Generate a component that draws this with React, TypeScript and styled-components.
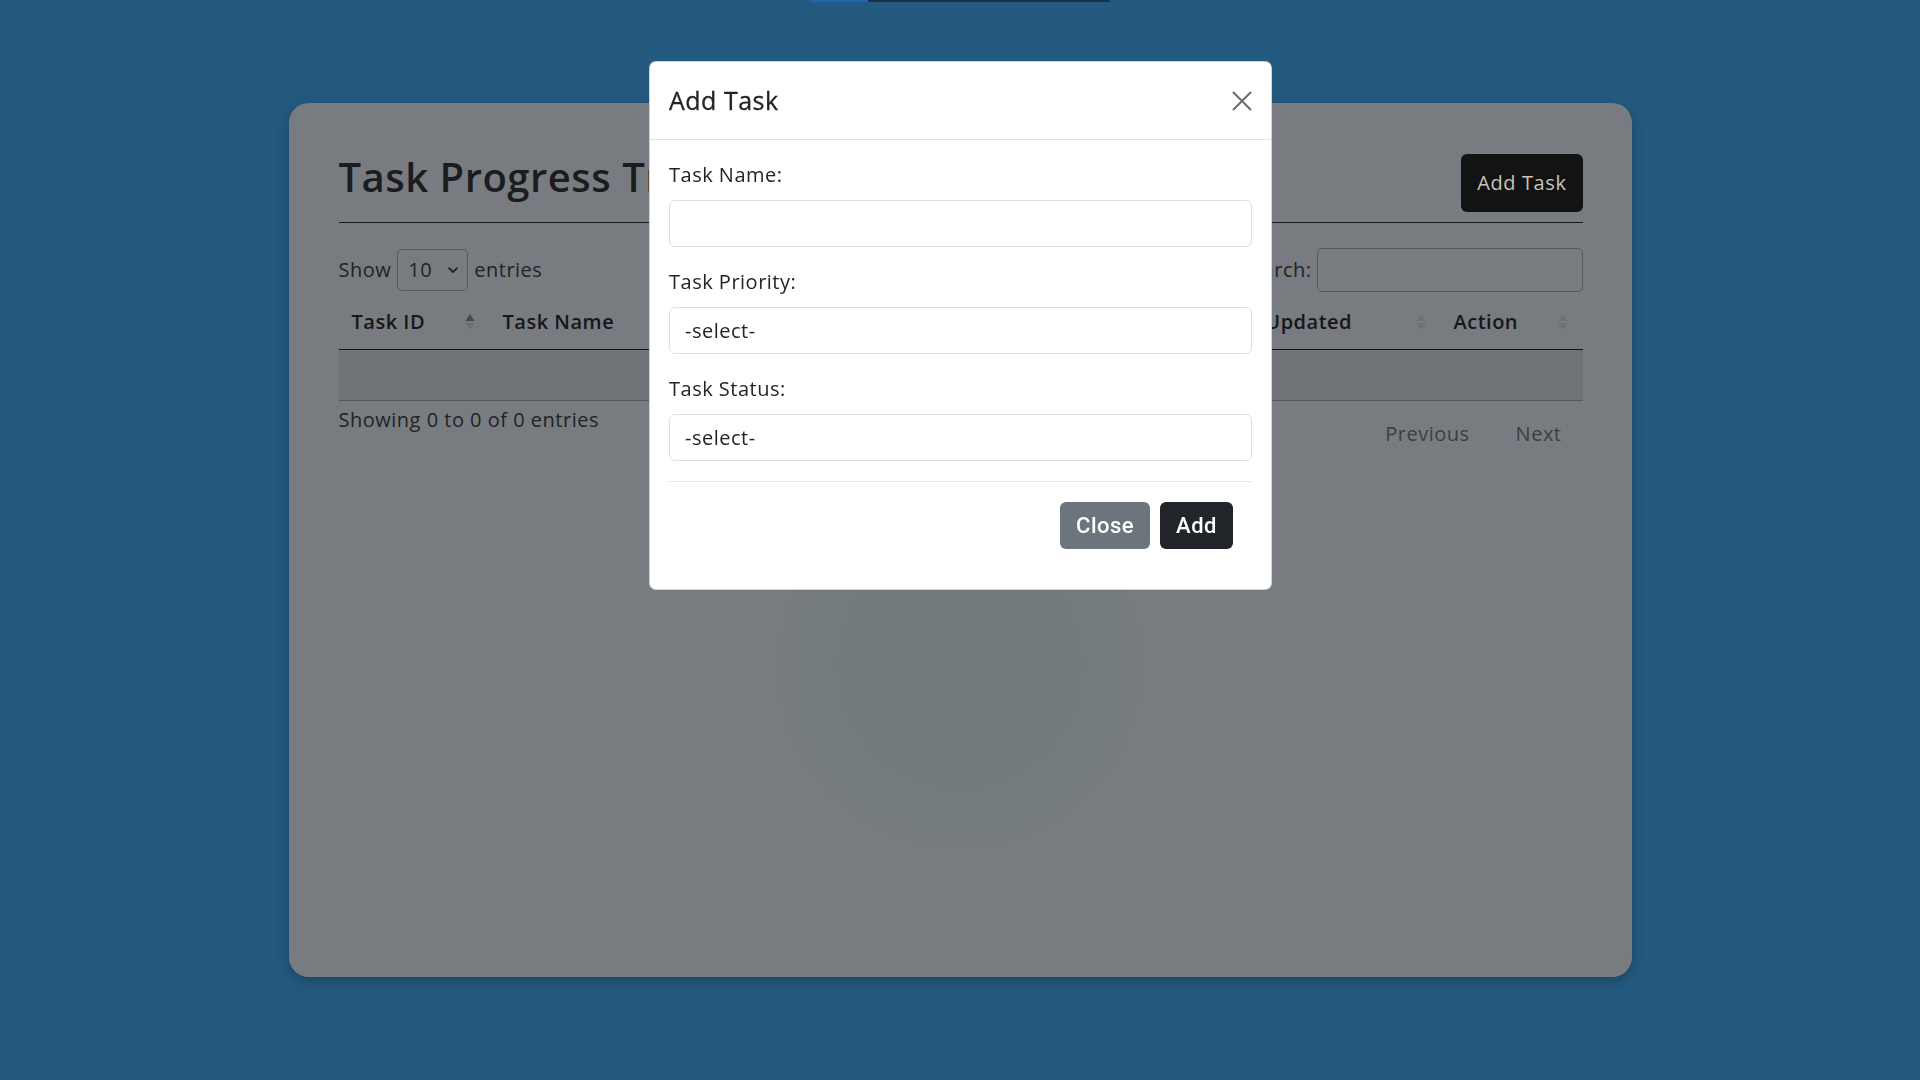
import React from 'react';
import styled, {createGlobalStyle} from "styled-components";

const GlobalStyle = createGlobalStyle`
    * {
        box-sizing: border-box;
    }
    body {
        margin: 0;
        background: #245a7f;
        font-family: "Open Sans", "Noto Sans", sans-serif;
        letter-spacing: 0.5px;
        min-height: 100vh;
    }
`

type SortState = 'asc' | 'none'

const SortIcon = ({state}: { state: SortState }) => (
    <svg width="10" height="20" viewBox="0 0 10 20">
        <polygon points="5,2 9.5,9 0.5,9" fill={state === 'asc' ? '#45494d' : '#6c7074'}/>
        <polygon points="5,18 9.5,11 0.5,11" fill="#6c7074"/>
    </svg>
)

const Chevron = () => (
    <svg width="12" height="12" viewBox="0 0 12 12">
        <path d="M2 4.2 L6 8 L10 4.2" fill="none" stroke="#202326" strokeWidth="1.8" strokeLinecap="round"
              strokeLinejoin="round"/>
    </svg>
)

const CloseIcon = () => (
    <svg width="20" height="20" viewBox="0 0 20 20">
        <path d="M1.5 1.5 L18.5 18.5 M18.5 1.5 L1.5 18.5" stroke="#6b6b6b" strokeWidth="2" strokeLinecap="round"/>
    </svg>
)

const columns: { title: string, width: number, sort: SortState }[] = [
    {title: 'Task ID', width: 151, sort: 'asc'},
    {title: 'Task Name', width: 240, sort: 'none'},
    {title: 'Task Priority', width: 240, sort: 'none'},
    {title: 'Task Status', width: 235, sort: 'none'},
    {title: 'Last Updated', width: 236, sort: 'none'},
    {title: 'Action', width: 142, sort: 'none'},
]

export default function App() {
    return (
        <>
            <GlobalStyle/>
            <Page>
                <TopStrip>
                    <StripSegment width={58} color="#1f66b0"/>
                    <StripSegment width={242} color="#1b3148"/>
                </TopStrip>
                <Card>
                    <TitleRow>
                        <Title>Task Progress Tracker</Title>
                        <DarkButton>Add Task</DarkButton>
                    </TitleRow>
                    <Controls>
                        <LengthControl>
                            Show
                            <FakeSelect>
                                <span>10</span>
                                <Chevron/>
                            </FakeSelect>
                            entries
                        </LengthControl>
                        <SearchControl>
                            Search:
                            <SearchInput type="text"/>
                        </SearchControl>
                    </Controls>
                    <Table>
                        <colgroup>
                            {columns.map(c => <col key={c.title} style={{width: c.width}}/>)}
                        </colgroup>
                        <thead>
                        <tr>
                            {columns.map(c => (
                                <HeadCell key={c.title}>
                                    {c.title}
                                    <SortSlot><SortIcon state={c.sort}/></SortSlot>
                                </HeadCell>
                            ))}
                        </tr>
                        </thead>
                        <tbody>
                        <tr>
                            <EmptyCell colSpan={6}>No data available in table</EmptyCell>
                        </tr>
                        </tbody>
                    </Table>
                    <TableFooter>
                        <Info>Showing 0 to 0 of 0 entries</Info>
                        <Paginate>
                            <PageLink>Previous</PageLink>
                            <PageLink>Next</PageLink>
                        </Paginate>
                    </TableFooter>
                </Card>
            </Page>

            <Overlay>
                <Modal>
                    <ModalHeader>
                        <ModalTitle>Add Task</ModalTitle>
                        <IconButton aria-label="Close"><CloseIcon/></IconButton>
                    </ModalHeader>
                    <ModalBody>
                        <Field>
                            <Label>Task Name:</Label>
                            <TextInput type="text"/>
                        </Field>
                        <Field>
                            <Label>Task Priority:</Label>
                            <Select defaultValue="">
                                <option value="">-select-</option>
                                <option>High</option>
                                <option>Medium</option>
                                <option>Low</option>
                            </Select>
                        </Field>
                        <Field>
                            <Label>Task Status:</Label>
                            <Select defaultValue="">
                                <option value="">-select-</option>
                                <option>Pending</option>
                                <option>In Progress</option>
                                <option>Completed</option>
                            </Select>
                        </Field>
                        <Divider/>
                        <ModalActions>
                            <ActionButton variant="secondary">Close</ActionButton>
                            <ActionButton variant="dark">Add</ActionButton>
                        </ModalActions>
                    </ModalBody>
                </Modal>
            </Overlay>
        </>
    );
}

const Page = styled.div`
    min-height: 1080px;
    display: flex;
    flex-direction: column;
    align-items: center;
`

const TopStrip = styled.div`
    display: flex;
    height: 2px;
`

const StripSegment = styled.div<{ width: number, color: string }>`
    width: ${p => p.width}px;
    background: ${p => p.color};
`

const Card = styled.div`
    width: 1343px;
    height: 874px;
    margin-top: 101px;
    padding: 50px 49px 0 50px;
    border-radius: 20px;
    background: radial-gradient(circle at 50% 64.5%, #717a7a 0, #727a7b 90px, #747b7d 150px, #777c80 200px, #787c80 240px);
    box-shadow: 0 4px 14px rgba(0, 0, 0, 0.25);
    color: #202326;
    font-size: 20px;
`

const TitleRow = styled.div`
    display: flex;
    justify-content: space-between;
    align-items: center;
    padding-bottom: 10px;
    border-bottom: 1px solid #17191b;
`

const Title = styled.h1`
    margin: 0 0 11px;
    font-size: 40px;
    font-weight: 600;
    line-height: 1.2;
    color: #1b1c1e;
`

const DarkButton = styled.button`
    height: 58px;
    padding: 0 16px;
    border: none;
    border-radius: 6px;
    background: #121313;
    color: #c9c3b9;
    font-family: inherit;
    font-size: 20px;
    letter-spacing: 0.6px;
    line-height: 30px;
`

const Controls = styled.div`
    display: flex;
    justify-content: space-between;
    align-items: center;
    height: 44px;
    margin-top: 25px;
`

const LengthControl = styled.label`
    display: flex;
    align-items: center;
    gap: 6px;
    line-height: 30px;
`

const FakeSelect = styled.span`
    display: flex;
    align-items: center;
    justify-content: space-between;
    width: 71px;
    height: 42px;
    padding: 0 8px 0 10px;
    border: 1px solid #55595d;
    border-radius: 5px;
`

const SearchControl = styled.label`
    display: flex;
    align-items: center;
    gap: 5px;
    line-height: 30px;
`

const SearchInput = styled.input`
    width: 266px;
    height: 44px;
    border: 1px solid #55595d;
    border-radius: 5px;
    background: transparent;
`

const Table = styled.table`
    width: 100%;
    margin-top: 3px;
    border-collapse: collapse;
    table-layout: fixed;
`

const HeadCell = styled.th`
    position: relative;
    padding: 12px 22px 12px 13px;
    border-bottom: 1px solid #111315;
    text-align: left;
    font-size: 20px;
    font-weight: 600;
    line-height: 30px;
    color: #151719;
    white-space: nowrap;
`

const SortSlot = styled.span`
    position: absolute;
    right: 15px;
    top: 15px;
`

const EmptyCell = styled.td`
    height: 51px;
    padding: 0;
    background: #707478;
    border-bottom: 1px solid #55595d;
    color: transparent;
`

const TableFooter = styled.div`
    display: flex;
    justify-content: space-between;
    align-items: flex-start;
    margin-top: 4px;
`

const Info = styled.div`
    line-height: 30px;
`

const Paginate = styled.div`
    display: flex;
    margin-top: 14px;
    margin-right: 1px;
`

const PageLink = styled.span`
    padding: 0 20px;
    margin-left: 6px;
    line-height: 30px;
    color: #3b3e41;
`

const Overlay = styled.div`
    position: fixed;
    inset: 0;
    display: flex;
    justify-content: center;
    align-items: flex-start;
    padding-top: 61px;
    padding-left: 1px;
`

const Modal = styled.div`
    width: 623px;
    background: #ffffff;
    border: 1px solid rgba(0, 0, 0, 0.18);
    border-radius: 7px;
    color: #212529;
    font-size: 20px;
`

const ModalHeader = styled.div`
    display: flex;
    justify-content: space-between;
    align-items: center;
    padding: 20px 19px 20px 19px;
    border-bottom: 1px solid #dee2e6;
`

const ModalTitle = styled.h5`
    margin: 0;
    font-size: 25px;
    font-weight: 500;
    line-height: 37px;
    -webkit-text-stroke: 0.3px #212529;
`

const IconButton = styled.button`
    display: flex;
    padding: 0;
    border: none;
    background: none;
`

const ModalBody = styled.div`
    padding: 20px 19px 0 19px;
`

const Field = styled.div`
    display: flex;
    flex-direction: column;
    margin-bottom: 20px;
`

const Label = styled.label`
    line-height: 30px;
    margin-bottom: 10px;
`

const TextInput = styled.input`
    height: 47px;
    padding: 7px 15px;
    border: 1px solid #dcdfe3;
    border-radius: 6px;
    font-family: inherit;
    font-size: 20px;
`

const Select = styled.select`
    appearance: none;
    height: 47px;
    padding: 7px 15px;
    border: 1px solid #dcdfe3;
    border-radius: 6px;
    background: #fff;
    color: #212529;
    font-family: inherit;
    font-size: 20px;
    letter-spacing: 0.5px;
    line-height: 30px;
`

const Divider = styled.hr`
    margin: 0;
    border: none;
    border-top: 1px solid #e3e5e8;
`

const ActionButton = styled.button<{ variant: 'secondary' | 'dark' }>`
    height: 47px;
    padding: 0 16px;
    border: none;
    border-radius: 6px;
    background: ${p => p.variant === 'secondary' ? '#6c757d' : '#212529'};
    color: #ffffff;
    font-family: "Roboto", "Liberation Sans", sans-serif;
    font-size: 22px;
    font-weight: 500;
    letter-spacing: 0.5px;
`

const ModalActions = styled.div`
    display: flex;
    justify-content: flex-end;
    gap: 10px;
    padding: 20px 19px 40px 0;
`
